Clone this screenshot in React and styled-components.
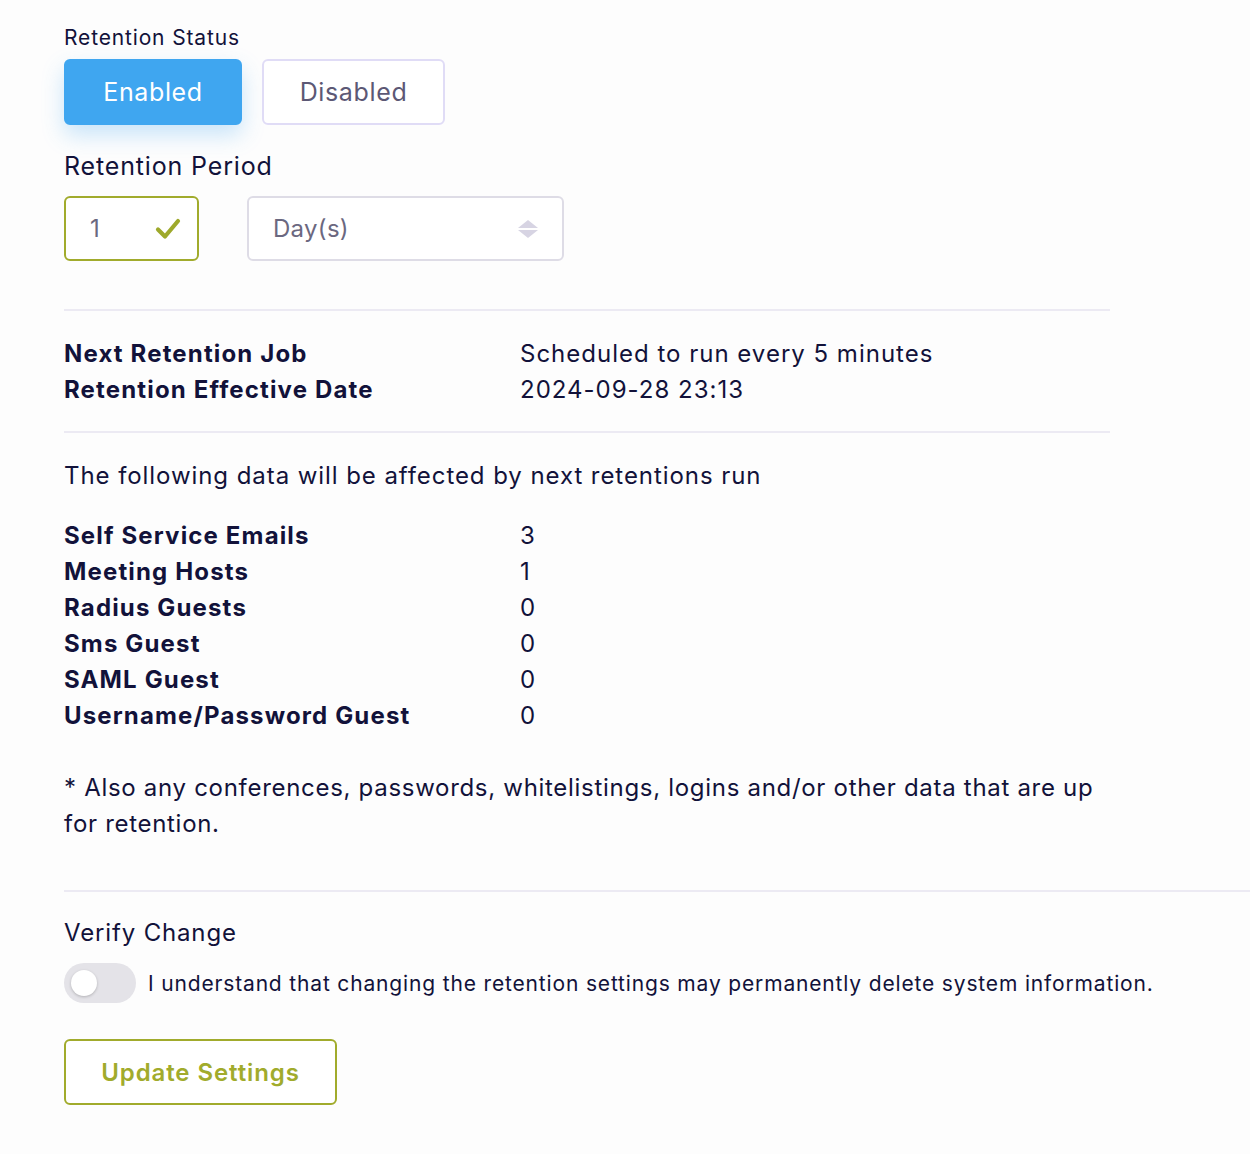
import { Fragment } from "react";
import styled, { createGlobalStyle } from "styled-components";

const GlobalStyle = createGlobalStyle`
  html, body {
    margin: 0;
    padding: 0;
    background: #fdfdfd;
  }
  body {
    font-family: Inter, "Noto Sans", sans-serif;
    letter-spacing: 0.64px;
    color: #12123a;
  }
`;

const Page = styled.main`
  display: flex;
  flex-direction: column;
  padding: 26px 0 48px 64px;
`;

const Section = styled.section`
  width: 1046px;
  display: flex;
  flex-direction: column;
`;

const Label = styled.p`
  margin: 0;
  font-size: ${(props) => props.size || 21}px;
  line-height: ${(props) => props.lineHeight || 24}px;
  margin-top: ${(props) => props.offset || 0}px;
  letter-spacing: 0.85px;
  color: #12123a;
`;

const ButtonGroup = styled.div`
  display: flex;
  gap: 20px;
  margin-top: 9px;
`;

const StatusButton = styled.button`
  height: 66px;
  width: ${(props) => props.width}px;
  border-radius: 6px;
  font-family: inherit;
  letter-spacing: inherit;
  font-size: 25px;
  cursor: pointer;
  border: 2px solid ${(props) => (props.active ? "#3fa6f0" : "#e0dcf6")};
  background: ${(props) => (props.active ? "#3fa6f0" : "#ffffff")};
  color: ${(props) => (props.active ? "#ffffff" : "#5c5875")};
  box-shadow: ${(props) =>
    props.active ? "0 10px 22px rgba(63, 166, 240, 0.28)" : "none"};
`;

const FieldRow = styled.div`
  display: flex;
  gap: 48px;
  margin-top: 15px;
`;

const Field = styled.div`
  height: 65px;
  width: ${(props) => props.width}px;
  box-sizing: border-box;
  border-radius: 6px;
  border: 2px solid ${(props) => props.borderColor};
  background: #ffffff;
  display: flex;
  align-items: center;
  justify-content: space-between;
  padding: 0 ${(props) => props.padRight}px 0 24px;
  font-size: 24px;
  letter-spacing: 0.3px;
  color: #6b6880;
`;

const Divider = styled.hr`
  border: 0;
  height: 2px;
  background: #eceaf3;
  margin: ${(props) => props.margin};
`;

const InfoGrid = styled.div`
  display: grid;
  grid-template-columns: 456px 1fr;
  font-size: 24px;
  line-height: 36px;
  letter-spacing: 1px;
  margin-top: ${(props) => props.offset || 0}px;
`;

const Key = styled.span`
  font-weight: 700;
  letter-spacing: 1.15px;
`;

const Value = styled.span`
  font-weight: 400;
`;

const Note = styled.p`
  margin: 0;
  margin-top: ${(props) => props.offset || 0}px;
  font-size: 24px;
  line-height: 36px;
  letter-spacing: ${(props) => props.spacing || 0.7}px;
`;

const ConsentRow = styled.label`
  display: flex;
  align-items: center;
  gap: 12px;
  margin-top: 15px;
  font-size: 21px;
  letter-spacing: 0.84px;
`;

const Toggle = styled.span`
  position: relative;
  width: 72px;
  height: 40px;
  border-radius: 20px;
  background: #e4e3e8;
  flex-shrink: 0;
`;

const Knob = styled.span`
  position: absolute;
  top: 7px;
  left: 7px;
  width: 26px;
  height: 26px;
  border-radius: 50%;
  background: #ffffff;
  box-shadow: 0 1px 3px rgba(0, 0, 0, 0.22);
`;

const SubmitButton = styled.button`
  margin-top: 36px;
  width: 273px;
  height: 66px;
  border-radius: 6px;
  border: 2px solid #a1ab2c;
  background: #ffffff;
  color: #a1ab2c;
  font-family: inherit;
  letter-spacing: 0.9px;
  font-size: 24px;
  font-weight: 600;
  cursor: pointer;
`;

const CheckIcon = () => (
  <svg width="26" height="22" viewBox="0 0 26 22">
    <path
      d="M3 11.5 L10 18.5 L23 3"
      fill="none"
      stroke="#9ea92b"
      strokeWidth="4.2"
      strokeLinecap="round"
      strokeLinejoin="round"
    />
  </svg>
);

const SortIcon = () => (
  <svg width="22" height="20" viewBox="0 0 22 20">
    <path d="M11 1 L21 9 L1 9 Z" fill="#d7d4e3" />
    <path d="M1 11 L21 11 L11 19 Z" fill="#d7d4e3" />
  </svg>
);

const retentionCounts = [
  ["Self Service Emails", 3],
  ["Meeting Hosts", 1],
  ["Radius Guests", 0],
  ["Sms Guest", 0],
  ["SAML Guest", 0],
  ["Username/Password Guest", 0],
];

const App = () => (
  <>
    <GlobalStyle />
    <Page>
      <Section>
        <Label size={21}>Retention Status</Label>
        <ButtonGroup>
          <StatusButton active width={178}>Enabled</StatusButton>
          <StatusButton width={183}>Disabled</StatusButton>
        </ButtonGroup>

        <Label size={25} lineHeight={30} offset={26}>
          Retention Period
        </Label>
        <FieldRow>
          <Field width={135} padRight={16} borderColor="#a1ab2c">
            1
            <CheckIcon />
          </Field>
          <Field width={317} padRight={23} borderColor="#dedce6">
            Day(s)
            <SortIcon />
          </Field>
        </FieldRow>

        <Divider margin="48px 0 25px" />
        <InfoGrid>
          <Key>Next Retention Job</Key>
          <Value>Scheduled to run every 5 minutes</Value>
          <Key>Retention Effective Date</Key>
          <Value>2024-09-28 23:13</Value>
        </InfoGrid>
        <Divider margin="23px 0 25px" />

        <Note spacing={0.93}>
          The following data will be affected by next retentions run
        </Note>
        <InfoGrid offset={24}>
          {retentionCounts.map(([name, count]) => (
            <Fragment key={name}>
              <Key>{name}</Key>
              <Value>{count}</Value>
            </Fragment>
          ))}
        </InfoGrid>

        <Note offset={36}>
          * Also any conferences, passwords, whitelistings, logins and/or other
          data that are up for retention.
        </Note>
      </Section>

      <Divider margin="48px 0 26px" />

      <Label size={24} lineHeight={30}>Verify Change</Label>
      <ConsentRow>
        <Toggle>
          <Knob />
        </Toggle>
        I understand that changing the retention settings may permanently
        delete system information.
      </ConsentRow>
      <div>
        <SubmitButton>Update Settings</SubmitButton>
      </div>
    </Page>
  </>
);

export default App;
